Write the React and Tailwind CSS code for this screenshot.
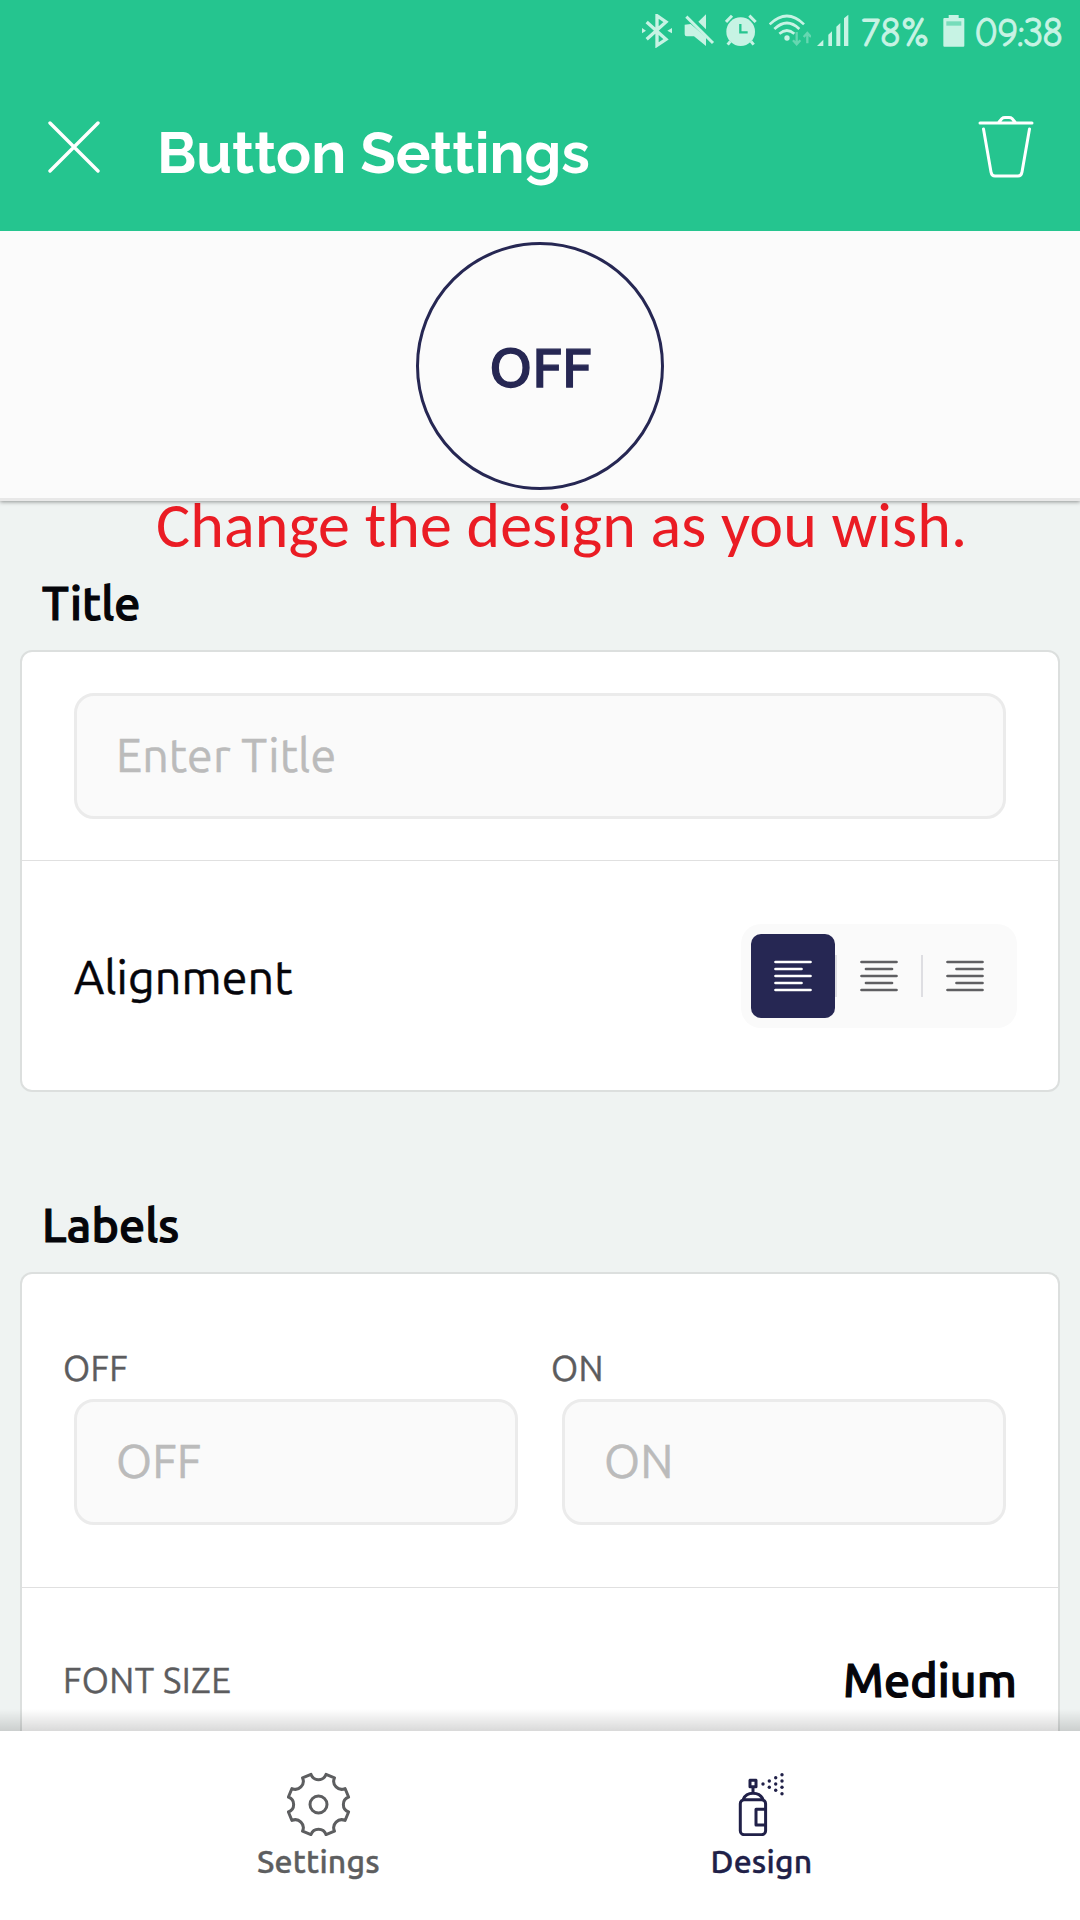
import React from 'react';

const UI = "font-['Ubuntu','Noto_Sans',sans-serif]";
const CLOCK = "-mt-px font-['Comic_Neue','Noto_Sans',cursive] text-[40px] leading-[40px] whitespace-nowrap [-webkit-text-stroke:0.9px_#c7f3e4]";

function StatusBar() {
  return (
    <div className="flex h-16 items-start pl-[642px] pt-[14px] text-[#c7f3e4]">
      <svg className="h-[34px] w-[30px] shrink-0" viewBox="66 42 90 102" fill="none">
        <path d="M80 66L138 118L111 136V47L138 66L80 118" stroke="currentColor" strokeWidth="10" />
        <path d="M66 84L78 92L66 100ZM156 84L142 92L156 100Z" fill="currentColor" />
      </svg>
      <svg className="ml-3 h-[34px] w-[31px] shrink-0" viewBox="192 42 93 102" fill="none">
        <path d="M258 43V88L235 65ZM194 74L212 72L258 112V138L222 109H200Q194 109 194 103Z" fill="currentColor" />
        <path d="M199 50L279 129" stroke="currentColor" strokeWidth="9" />
      </svg>
      <svg className="ml-[10px] h-[34px] w-8 shrink-0" viewBox="316 42 96 102" fill="none">
        <circle cx="363" cy="95" r="43" fill="currentColor" />
        <path d="M319 66L337 47M389 47L408 66M332 124L324 134M394 124L402 134" stroke="currentColor" strokeWidth="9" />
        <path d="M362 72V97H384" stroke="#25c58f" strokeWidth="7" />
      </svg>
      <svg className="ml-3 h-[34px] w-[42px] shrink-0" viewBox="447 42 126 102" fill="none">
        <path d="M449 73Q501 23 552 73M463 87Q501 51 538 87M478 101Q501 82 523 101" stroke="currentColor" strokeWidth="8" />
        <circle cx="501" cy="114" r="8" fill="currentColor" />
        <path d="M530 96V132M519 121L530 133L541 121M562 130V100M551 111L562 99L573 111" stroke="currentColor" strokeWidth="7" opacity=".4" />
      </svg>
      <svg className="ml-[6px] h-[34px] w-8 shrink-0" viewBox="590 42 96 102" fill="currentColor">
        <path d="M590 138L609 119V138ZM624 138V104L635 94V138ZM648 138V80L660 69V138ZM671 138V55L684 44V138Z" />
      </svg>
      <span className={`ml-[12px] w-[67px] tracking-[0.2px] ${CLOCK}`}>78%</span>
      <svg className="ml-[15px] h-[34px] w-[22px] shrink-0" viewBox="968 42 66 102" fill="currentColor">
        <path d="M985 45H1015V54H1029Q1032 54 1032 57V137Q1032 140 1029 140H972Q969 140 969 137V57Q969 54 972 54H985Z" />
        <path d="M978 64H1023V77H978Z" fill="#25c58f" opacity=".5" />
      </svg>
      <span className={`ml-[9px] tracking-[-1.2px] ${CLOCK}`}>09:38</span>
    </div>
  );
}

function Header() {
  return (
    <header className="relative z-20 h-[231px] shrink-0 bg-[#25c58f] text-white">
      <StatusBar />
      <div className="flex h-[166px] items-center pl-12 pr-[45px]">
        <svg className="h-[52px] w-[52px]" viewBox="0 0 52 52" fill="none" stroke="currentColor" strokeWidth="3.4" strokeLinecap="round">
          <path d="M2 2L50 50M50 2L2 50" />
        </svg>
        <h1 className="ml-[57px] pt-[11px] font-['Raleway','Lato',sans-serif] text-[58px] font-bold leading-[60px]">
          Button Settings
        </h1>
        <svg className="ml-auto h-[62px] w-[57px]" viewBox="0 0 57 62" fill="none" stroke="currentColor" strokeWidth="3" strokeLinecap="round" strokeLinejoin="round">
          <path d="M2 7H54M21 6L24 2.500Q25 1.500 27 1.500H31Q33 1.500 34 2.500L37 6" />
          <path d="M5.500 13L13 56Q13.700 60 17 60H40Q43.300 60 44 56L51.500 13" />
        </svg>
      </div>
    </header>
  );
}

function Field({ placeholder }) {
  return (
    <div className="flex h-[126px] w-full items-center rounded-[20px] border-[3px] border-[#ebebeb] bg-[#fafafa] pb-[2px] pl-[39px] text-[46.5px] leading-[56px] tracking-[0.1px] text-[#bbbbbb] [-webkit-text-stroke:0.5px_#bbbbbb]">
      {placeholder}
    </div>
  );
}

function Card({ className, children }) {
  return <section className={`mx-5 border-2 border-[#dcdfde] bg-white ${className}`}>{children}</section>;
}

function AlignIcon({ short }) {
  return (
    <svg className="mt-px h-8 w-[38px]" viewBox="0 0 38 32" fill="none" stroke="currentColor" strokeWidth="2.7" strokeLinecap="round">
      <path d="M1.500 2H36.500M1.500 16H36.500M1.500 30H36.500" />
      <path d={`M${short[0]} 9H${short[1]}M${short[0]} 23H${short[1]}`} />
    </svg>
  );
}

function AlignmentPicker() {
  return (
    <div className="flex h-[104px] w-[276px] items-center rounded-[20px] bg-[#fafafa] pl-[10px] text-[#5f5f62]">
      <div className="flex h-[84px] w-[84px] items-center justify-center rounded-[10px] bg-[#262753] text-white">
        <AlignIcon short={[1.5, 27.5]} />
      </div>
      <div className="h-[42px] w-[2px] bg-[#dedee2]" />
      <div className="flex w-[84px] items-center justify-center">
        <AlignIcon short={[6, 32]} />
      </div>
      <div className="h-[42px] w-[2px] bg-[#dedee2]" />
      <div className="flex w-[84px] items-center justify-center">
        <AlignIcon short={[10.5, 36.5]} />
      </div>
    </div>
  );
}

const gearPoint = (deg, r = 31) => {
  const a = ((deg - 90) * Math.PI) / 180;
  return `${(31.5 + r * Math.cos(a)).toFixed(2)} ${(32.5 + r * Math.sin(a)).toFixed(2)}`;
};

const GEAR = [0, 1, 2, 3, 4, 5, 6, 7]
  .map((k) => `${k ? 'L' : 'M'}${gearPoint(k * 45 - 14)}A8 8 0 0 0 ${gearPoint(k * 45 + 14)}`)
  .join('') + 'Z';

const SPRAY = [[33, 12], [39.3, 9], [39.3, 15.3], [45.7, 5.7], [45.7, 12], [45.7, 18.3], [52, 2.7], [52, 9], [52, 15.3], [52, 21.7]];

function Tab({ label, className, children }) {
  return (
    <div className={`flex w-[443px] flex-col items-center pt-[41px] ${className}`}>
      <svg className="h-16 w-16" viewBox="0 0 64 64" fill="none" stroke="currentColor" strokeWidth="3" strokeLinejoin="round">
        {children}
      </svg>
      <span className="mt-[5px] text-[32px] font-medium leading-10 tracking-[0.2px] [-webkit-text-stroke:0.4px_currentColor]">{label}</span>
    </div>
  );
}

const HEADING = "pl-[42px] text-[46.5px] font-medium leading-[56px] tracking-[0.1px] text-[#05050a] [-webkit-text-stroke:1.2px_#05050a]";

export default function App() {
  return (
    <div className={`flex h-[1920px] w-[1080px] flex-col overflow-hidden bg-[#eff3f2] ${UI}`}>
      <Header />
      <div className="relative z-10 flex h-[270px] shrink-0 justify-center border-b-[3px] border-[#e8e8e8] bg-[#fbfbfb] pt-[11px] shadow-[0_1px_4px_rgba(0,0,0,0.4)]">
        <div className="flex h-[248px] w-[248px] items-center justify-center rounded-full border-[3px] border-[#262753]">
          <span className="pl-px pt-[1px] text-[55px] font-medium leading-[60px] text-[#262753] [-webkit-text-stroke:1.3px_#262753]">OFF</span>
        </div>
      </div>

      <main className="relative min-h-0 flex-1">
        <p className="h-[74px] whitespace-nowrap pl-[156px] font-['Carlito','Lato',sans-serif] text-[64px] leading-[48px] tracking-[0.1px] text-[#ea1c24]">
          Change the design as you wish.
        </p>

        <h2 className={HEADING}>Title</h2>
        <Card className="mt-[19px] rounded-[12px]">
          <div className="border-b border-[#e0e0e0] px-[52px] py-[41px]">
            <Field placeholder="Enter Title" />
          </div>
          <div className="flex h-[229px] items-center justify-between pl-[52px] pr-[41px]">
            <span className="pt-[2px] text-[46.5px] leading-[56px] tracking-[0.1px] text-[#05050a] [-webkit-text-stroke:0.5px_#05050a]">Alignment</span>
            <AlignmentPicker />
          </div>
        </Card>

        <h2 className={`mt-[105px] ${HEADING}`}>Labels</h2>
        <Card className="mt-[19px] rounded-t-[12px] border-b-0">
          <div className="flex gap-11 border-b border-[#e0e0e0] px-[52px] pb-[62px] pt-[74px]">
            {['OFF', 'ON'].map((name) => (
              <div key={name} className="flex-1">
                <div className="-ml-[11px] mb-[11px] text-[35px] leading-10 tracking-[0.3px] text-[#5c5c5e] [-webkit-text-stroke:0.4px_#5c5c5e]">{name}</div>
                <Field placeholder={name} />
              </div>
            ))}
          </div>
          <div className="flex h-[143px] items-center justify-between pl-[41px] pr-[41px] pt-[41px]">
            <span className="text-[35px] leading-10 tracking-[0.4px] text-[#5c5c5e] [-webkit-text-stroke:0.4px_#5c5c5e]">FONT SIZE</span>
            <span className="text-[46.5px] font-medium leading-[56px] tracking-[0.1px] text-[#05050a] [-webkit-text-stroke:1.2px_#05050a]">Medium</span>
          </div>
        </Card>
        <div className="absolute inset-x-0 bottom-0 h-[22px] bg-gradient-to-b from-transparent to-black/15" />
      </main>

      <nav className="relative flex h-[189px] shrink-0 justify-center bg-white">
        <Tab label="Settings" className="text-[#5d5e60]">
          <path d={GEAR} />
          <circle cx="31.5" cy="32.5" r="8.5" />
        </Tab>
        <Tab label="Design" className="text-[#202048]">
          <path d="M20 8.300H26V14.700H20ZM23 15V21M13.300 27.300Q15.800 21.300 23 21.300T33 27.300" />
          <rect x="10.300" y="27.700" width="25.300" height="35" rx="4" />
          <path d="M35.600 37.300H26V53H35.600" />
          <g fill="currentColor" stroke="none">
            {SPRAY.map(([x, y]) => (
              <circle key={`${x}-${y}`} cx={x} cy={y} r="1.7" />
            ))}
          </g>
        </Tab>
      </nav>
    </div>
  );
}
